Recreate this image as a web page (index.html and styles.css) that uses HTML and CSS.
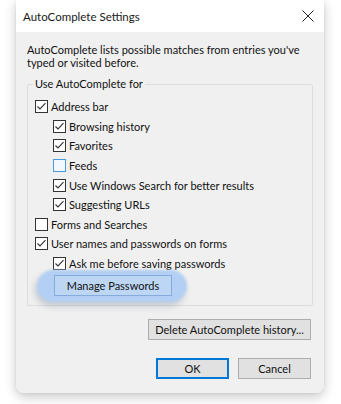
FILE: index.html
```html
<!DOCTYPE html>
<html>
<head>
<meta charset="utf-8">
<link rel="stylesheet" href="styles.css">
</head>
<body>
<div class="dialog">
  <div class="titlebar">
    <span class="title">AutoComplete Settings</span>
    <svg class="close" width="12" height="12" viewBox="0 0 12 12"><path d="M0.5 0.5 L11.5 11.5 M11.5 0.5 L0.5 11.5" stroke="#222" stroke-width="1" fill="none"/></svg>
  </div>
  <div class="content">
    <p class="desc">AutoComplete lists possible matches from entries you've typed or visited before.</p>
    <fieldset class="group">
      <legend>Use AutoComplete for</legend>
      <div class="row"><span class="cb on"></span>Address bar</div>
      <div class="row sub"><span class="cb on"></span>Browsing history</div>
      <div class="row sub"><span class="cb on"></span>Favorites</div>
      <div class="row sub"><span class="cb hover"></span>Feeds</div>
      <div class="row sub"><span class="cb on"></span>Use Windows Search for better results</div>
      <div class="row sub"><span class="cb on"></span>Suggesting URLs</div>
      <div class="row"><span class="cb"></span>Forms and Searches</div>
      <div class="row"><span class="cb on"></span>User names and passwords on forms</div>
      <div class="row sub"><span class="cb on"></span>Ask me before saving passwords</div>
      <div class="manage-wrap">
        <span class="glow"></span>
        <button class="btn manage">Manage Passwords</button>
      </div>
    </fieldset>
    <div class="delete-row"><button class="btn delete">Delete AutoComplete history...</button></div>
    <div class="actions">
      <button class="btn ok">OK</button>
      <button class="btn">Cancel</button>
    </div>
  </div>
</div>
</body>
</html>
```

FILE: styles.css
```css
html, body {
  margin: 0;
  padding: 0;
  background: #ffffff;
}
body {
  width: 341px;
  height: 404px;
  overflow: hidden;
  font-family: "Lato", "Noto Sans", sans-serif;
  font-size: 11px;
  color: #111;
}
.dialog {
  margin-left: 16px;
  width: 308px;
  box-shadow: 0 4px 12px rgba(0, 0, 0, 0.22), 0 0 3px rgba(0, 0, 0, 0.08);
  border-radius: 0 0 8px 8px;
}
.titlebar {
  height: 32px;
  background: #ffffff;
  display: flex;
  align-items: center;
  justify-content: space-between;
  padding: 0 10px 0 7px;
}
.title {
  font-size: 11.5px;
  color: #1a1a1a;
  margin-top: 1px;
}
.close {
  display: block;
  margin-top: -1px;
}
.content {
  background: #f0f0f0;
  height: 361px;
  box-sizing: border-box;
  padding: 11px 11px 0 11px;
  border-radius: 0 0 8px 8px;
  display: flex;
  flex-direction: column;
}
.desc {
  margin: 0;
  line-height: 13px;
  width: 290px;
}
.group {
  margin: 8px 0 0 0;
  padding: 6px 0 8px 7px;
  border: 1px solid #dcdcdc;
  border-radius: 2px;
  height: 229px;
  box-sizing: border-box;
}
.group legend {
  padding: 0 2px;
  margin-left: -2px;
  line-height: 14px;
}
.row {
  height: 19.6px;
  display: flex;
  align-items: center;
  gap: 3px;
  white-space: nowrap;
}
.row.sub {
  padding-left: 18px;
}
.cb {
  width: 13px;
  height: 13px;
  box-sizing: border-box;
  border: 1px solid #333;
  background: #fff;
  flex: none;
}
.cb.on {
  background: #fff url("data:image/svg+xml,%3Csvg xmlns='http://www.w3.org/2000/svg' width='11' height='11' viewBox='0 0 11 11'%3E%3Cpath d='M1.5 5.5 L4 8 L9.5 2.2' stroke='%23333' stroke-width='1.1' fill='none'/%3E%3C/svg%3E") no-repeat center;
}
.cb.hover {
  border-color: #4a9ad9;
  background: #f2f8fd;
}
.manage-wrap {
  position: relative;
  margin-top: 2px;
  padding-left: 19px;
  height: 24px;
}
.glow {
  position: absolute;
  left: 2px;
  top: -5px;
  width: 150px;
  height: 32px;
  border-radius: 16px;
  background: #b3cff3;
  box-shadow: -2px 4px 6px rgba(60, 80, 110, 0.25);
  filter: blur(1.2px);
}
.btn {
  font-family: inherit;
  font-size: 11px;
  color: #111;
  background: #e1e1e1;
  border: 1px solid #adadad;
  height: 21px;
  padding: 0;
  margin: 0;
  box-sizing: border-box;
  border-radius: 0;
  line-height: 17px;
  white-space: nowrap;
}
.manage {
  position: relative;
  width: 118px;
  background: #bcd6f4;
  border-color: #86acdd;
}
.delete-row {
  display: flex;
  justify-content: flex-end;
  margin-top: 13px;
  padding-right: 2px;
}
.delete {
  width: 163px;
}
.actions {
  display: flex;
  justify-content: flex-end;
  gap: 9px;
  margin-top: 18px;
  padding-right: 2px;
}
.actions .btn {
  width: 73px;
}
.ok {
  border: 2px solid #0078d7;
}
```
